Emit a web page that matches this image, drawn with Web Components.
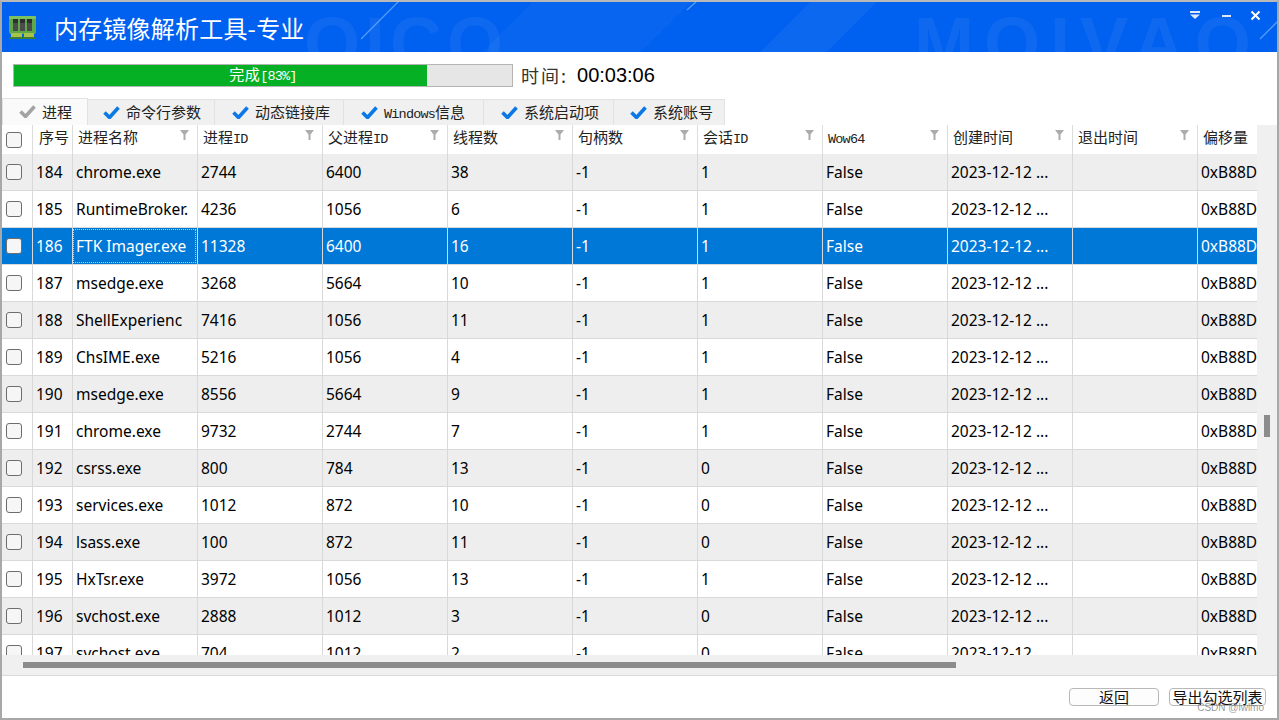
<!DOCTYPE html>
<html lang="zh">
<head>
<meta charset="utf-8">
<title>内存镜像解析工具</title>
<style>
    html, body { margin: 0; padding: 0; background: #fff; overflow: hidden; }
    body { font-family: "Noto Sans CJK SC", sans-serif; }
</style>
</head>
<body>
<mem-window>
    <title-bar slot="title" heading="内存镜像解析工具-专业"></title-bar>
    <progress-row slot="progress" value="83" label="完成[83%]" time="00:03:06"></progress-row>
    <tab-strip slot="tabs" items="进程,命令行参数,动态链接库,Windows信息,系统启动项,系统账号"></tab-strip>
    <process-table slot="table"></process-table>
    <foot-bar slot="footer"></foot-bar>
</mem-window>

<script>
const CJK = '"Noto Sans CJK SC", sans-serif';

// ascii runs in the simsun style labels are half width, so they get a narrower mono font
function mixLabel(text) {
    return text.replace(/[A-Za-z0-9\[\]%]+/g, m => `<span class="lat">${m}</span>`);
}

const LAT_CSS = `.lat{font-family:"Liberation Mono",monospace;font-size:.9em;letter-spacing:-.8px;}`;

class MemWindow extends HTMLElement {
    constructor() {
        super();
        this.attachShadow({ mode: 'open' });
        this.shadowRoot.innerHTML = `
        <style>
            :host{display:flex;flex-direction:column;box-sizing:border-box;width:1279px;height:720px;
                border-top:2px solid #b9b9b9;border-left:2px solid #a8a8a8;border-right:2px solid #a8a8a8;border-bottom:2px solid #a8a8a8;background:#fff;position:relative;overflow:hidden;}
            .mark{position:absolute;right:13px;bottom:5px;font:10px "Liberation Sans",sans-serif;color:rgba(90,90,90,.62);}
        </style>
        <slot name="title"></slot>
        <slot name="progress"></slot>
        <slot name="tabs"></slot>
        <slot name="table"></slot>
        <slot name="footer"></slot>
        <span class="mark">CSDN @lwlmo</span>`;
    }
}

class TitleBar extends HTMLElement {
    constructor() {
        super();
        this.attachShadow({ mode: 'open' });
        this.shadowRoot.innerHTML = `
        <style>
            :host{display:flex;align-items:center;height:50px;flex:none;position:relative;overflow:hidden;color:#fff;
                background:
                    linear-gradient(135deg,transparent 0 61%,rgba(255,255,255,.05) 61% 66%,transparent 66%),
                    linear-gradient(135deg,transparent 0 40%,rgba(255,255,255,.03) 40% 52%,transparent 52%),
                    #0060f0;}
            .water{position:absolute;top:0;font:bold 72px "Liberation Sans",sans-serif;color:rgba(255,255,255,.06);white-space:nowrap;}
            .w1{left:302px;letter-spacing:5px;} .w2{left:912px;letter-spacing:10px;}
            .lines{position:absolute;left:0;top:0;}
            .ico{margin-left:6px;flex:none;position:relative;}
            h1{margin:0 0 0 16px;font:400 24px ${CJK};letter-spacing:.2px;position:relative;white-space:nowrap;}
            .btns{position:absolute;right:0;top:0;display:flex;}
            .btns svg{display:block;}
        </style>
        <span class="water w1" aria-hidden="true">OICO</span>
        <span class="water w2" aria-hidden="true">MOIVAO</span>
        <svg class="lines" width="1275" height="50" viewBox="0 0 1275 50">
            <path d="M398 -2L359 37M696 -2L685 8M1276 19L1258 37" stroke="#6fb0ff" stroke-opacity=".75" stroke-width="1.3" fill="none"/>
        </svg>
        <svg class="ico" width="30" height="26" viewBox="0 0 30 26">
            <rect x="1" y="2" width="27" height="18" rx="2" fill="#5fa84a"/>
            <rect x="1" y="2" width="27" height="3" rx="1" fill="#7cc261"/>
            <rect x="3" y="19" width="11" height="5" fill="#a9c34a"/>
            <rect x="16" y="19" width="10" height="5" fill="#a9c34a"/>
            <rect x="1" y="23" width="27" height="2" rx="1" fill="#3d7d33"/>
            <rect x="5" y="5" width="5" height="12" fill="#4b4b4b"/>
            <rect x="12" y="5" width="5" height="12" fill="#4b4b4b"/>
            <rect x="19" y="5" width="5" height="12" fill="#4b4b4b"/>
            <rect x="5" y="5" width="5" height="4" fill="#2f2f2f"/>
            <rect x="12" y="5" width="5" height="4" fill="#2f2f2f"/>
            <rect x="19" y="5" width="5" height="4" fill="#2f2f2f"/>
        </svg>
        <h1></h1>
        <svg class="btns" width="100" height="30" viewBox="0 0 100 30">
            <rect x="13" y="9" width="10" height="2" fill="#dfe9fb"/>
            <path d="M13 12.5h10l-5 4.5z" fill="#dfe9fb"/>
            <rect x="45" y="13" width="9" height="2" fill="#dfe9fb"/>
            <path d="M74.5 9.5l8 8M82.5 9.5l-8 8" stroke="#fff" stroke-width="2" fill="none"/>
        </svg>`;
    }
    connectedCallback() {
        this.shadowRoot.querySelector('h1').textContent = this.getAttribute('heading');
    }
}

class ProgressRow extends HTMLElement {
    constructor() {
        super();
        this.attachShadow({ mode: 'open' });
    }
    connectedCallback() {
        let v = this.getAttribute('value');
        this.shadowRoot.innerHTML = `
        <style>
            :host{display:flex;align-items:center;height:46px;flex:none;padding-left:11px;}
            .bar{position:relative;box-sizing:border-box;width:500px;height:23px;border:1px solid #b4b4b4;background:#e6e6e6;}
            .fill{height:100%;background:#06b025;width:${v}%;}
            .txt{position:absolute;inset:0;display:flex;align-items:center;justify-content:center;color:#fff;font:15px/21px ${CJK};letter-spacing:.4px;}
            .t{margin-left:8px;font:18px ${CJK};color:#333;letter-spacing:2px;}
            .v{margin-left:9px;font:20px "Liberation Sans",sans-serif;color:#000;}
            ${LAT_CSS}
        </style>
        <div class="bar"><div class="fill"></div><div class="txt"><span>${mixLabel(this.getAttribute('label'))}</span></div></div>
        <span class="t">时间:</span><span class="v">${this.getAttribute('time')}</span>`;
    }
}

const TICK = (c) => `<svg width="17" height="14" viewBox="0 0 17 14"><path d="M1.5 7.5l5 5L15.5 2.5" fill="none" stroke="${c}" stroke-width="3.6"/></svg>`;

class TabStrip extends HTMLElement {
    constructor() {
        super();
        this.attachShadow({ mode: 'open' });
    }
    connectedCallback() {
        let widths = [86, 127, 129, 140, 130, 111];
        let pads = [16, 15, 17, 17, 17, 16];
        let html = this.getAttribute('items').split(',').map((t, i) => `
            <div class="tab ${i == 0 ? 'on' : ''}" style="width:${widths[i]}px;padding-left:${pads[i]}px">${TICK(i == 0 ? '#a3a3a3' : '#0a78e6')}<span>${mixLabel(t)}</span></div>`).join('');
        this.shadowRoot.innerHTML = `
        <style>
            :host{display:flex;align-items:flex-end;height:27px;flex:none;font:15px ${CJK};color:#222;}
            .tab{box-sizing:border-box;height:26px;display:flex;align-items:center;gap:6px;padding-bottom:2px;
                background:#f0f0f0;border:1px solid #e2e2e2;border-bottom:none;border-left:none;white-space:nowrap;}
            .on{height:27px;background:#fafafa;border-left:1px solid #e2e2e2;}
            ${LAT_CSS}
        </style>${html}`;
    }
}

const COLS = '31px 40px 125px repeat(9,125px)';

class TableHeader extends HTMLElement {
    constructor() {
        super();
        this.attachShadow({ mode: 'open' });
        let names = ['进程名称', '进程ID', '父进程ID', '线程数', '句柄数', '会话ID', 'Wow64', '创建时间', '退出时间'];
        let cells = names.map(n => `<div class="c">${mixLabel(n)}<svg class="f" width="9" height="10" viewBox="0 0 9 10"><path d="M0 0h9L5.5 4.5V10h-2V4.5z" fill="#acacac"/></svg></div>`).join('');
        this.shadowRoot.innerHTML = `
        <style>
            :host{display:grid;grid-template-columns:${COLS};height:29px;flex:none;background:#fff;font:15px/23px ${CJK};color:#222;white-space:nowrap;}
            .c{box-sizing:border-box;position:relative;padding-left:5px;border-right:1px solid #dcdcdc;}
            .box{display:flex;align-items:center;padding:0 0 0 4px;}
            .seq{padding-left:6px;}
            .f{position:absolute;right:8px;top:5px;}
            i{display:block;box-sizing:border-box;width:16px;height:16px;border:1px solid #6d6d6d;border-radius:3px;background:#f6f6f6;}
            ${LAT_CSS}
        </style>
        <div class="c box"><i></i></div><div class="c seq">序号</div>${cells}<div class="c">偏移量</div>`;
    }
}

class ProcRow extends HTMLElement {
    constructor() {
        super();
        this.attachShadow({ mode: 'open' });
    }
    connectedCallback() {
        let d = JSON.parse(this.getAttribute('data'));
        let cells = d.map((v, i) => `<div class="c ${i == 1 ? 'name' : ''}"><span>${v}</span></div>`).join('');
        this.shadowRoot.innerHTML = `
        <style>
            :host{display:grid;grid-template-columns:${COLS};height:37px;flex:none;box-sizing:border-box;border-bottom:1px solid #d9d9d9;
                font:15.5px/36px "Noto Sans",sans-serif;color:#000;background:#fff;white-space:nowrap;}
            :host([odd]){background:#eeeeee;}
            :host([sel]){background:#0078d7;color:#fff;border-bottom-color:#d9d9d9;}
            .c{box-sizing:border-box;padding-left:3px;border-right:1px solid #d9d9d9;overflow:hidden;position:relative;}
            .box{display:flex;align-items:center;padding-left:3px;}
            i{display:block;box-sizing:border-box;width:16px;height:16px;border:1px solid #6d6d6d;border-radius:3px;background:#f6f6f6;}
            .c:nth-child(2){padding-left:4px;}
            :host([sel]) .name::after{content:"";position:absolute;inset:1px 1px 1px 0;border:1px dotted #f3c27a;}
        </style>
        <div class="c box"><i></i></div>${cells}`;
    }
}

const ROWS = [
    [184, 'chrome.exe', 2744, 6400, 38, 1],
    [185, 'RuntimeBroker.', 4236, 1056, 6, 1],
    [186, 'FTK Imager.exe', 11328, 6400, 16, 1],
    [187, 'msedge.exe', 3268, 5664, 10, 1],
    [188, 'ShellExperienc', 7416, 1056, 11, 1],
    [189, 'ChsIME.exe', 5216, 1056, 4, 1],
    [190, 'msedge.exe', 8556, 5664, 9, 1],
    [191, 'chrome.exe', 9732, 2744, 7, 1],
    [192, 'csrss.exe', 800, 784, 13, 0],
    [193, 'services.exe', 1012, 872, 10, 0],
    [194, 'lsass.exe', 100, 872, 11, 0],
    [195, 'HxTsr.exe', 3972, 1056, 13, 1],
    [196, 'svchost.exe', 2888, 1012, 3, 0],
    [197, 'svchost.exe', 704, 1012, 2, 0]
];

class ProcessTable extends HTMLElement {
    constructor() {
        super();
        this.attachShadow({ mode: 'open' });
        this.shadowRoot.innerHTML = `
        <style>
            :host{display:grid;grid-template-columns:1fr 21px;grid-template-rows:530px 20px;flex:none;background:#f0f0f0;border-bottom:1px solid #d9d9d9;}
            .view{overflow:hidden;display:flex;flex-direction:column;width:1255px;background:#fff;}
            .view > *{width:1346px;}
            .v{position:relative;}
            .v b{display:block;width:6px;height:22px;background:#8c8c8c;margin:290px 0 0 7px;}
            .h{display:flex;align-items:center;}
            .h b{display:block;width:933px;height:6px;background:#8c8c8c;margin-left:21px;}
        </style>
        <div class="view"><table-header></table-header></div>
        <div class="v"><b></b></div>
        <div class="h"><b></b></div>
        <div></div>`;
        let view = this.shadowRoot.querySelector('.view');
        ROWS.forEach((r, i) => {
            let row = document.createElement('proc-row');
            row.setAttribute('data', JSON.stringify([r[0], r[1], r[2], r[3], r[4], -1, r[5], 'False', '2023-12-12 ...', '', '0xB88D']));
            if (i % 2 == 0) row.setAttribute('odd', '');
            if (r[0] == 186) row.setAttribute('sel', '');
            view.appendChild(row);
        });
    }
}

class FootBar extends HTMLElement {
    constructor() {
        super();
        this.attachShadow({ mode: 'open' });
        this.shadowRoot.innerHTML = `
        <style>
            :host{flex:1;display:flex;justify-content:flex-end;align-items:flex-start;gap:10px;padding:12px 11px 0 0;background:#fff;}
            .b{box-sizing:border-box;height:18px;border:1px solid #b8b8b8;border-radius:4px;background:#fdfdfd;font:15px/16px ${CJK};color:#111;text-align:center;white-space:nowrap;}
        </style>
        <div class="b" style="width:90px">返回</div>
        <div class="b" style="width:97px">导出勾选列表</div>`;
    }
}

customElements.define('mem-window', MemWindow);
customElements.define('title-bar', TitleBar);
customElements.define('progress-row', ProgressRow);
customElements.define('tab-strip', TabStrip);
customElements.define('table-header', TableHeader);
customElements.define('proc-row', ProcRow);
customElements.define('process-table', ProcessTable);
customElements.define('foot-bar', FootBar);
</script>
</body>
</html>
